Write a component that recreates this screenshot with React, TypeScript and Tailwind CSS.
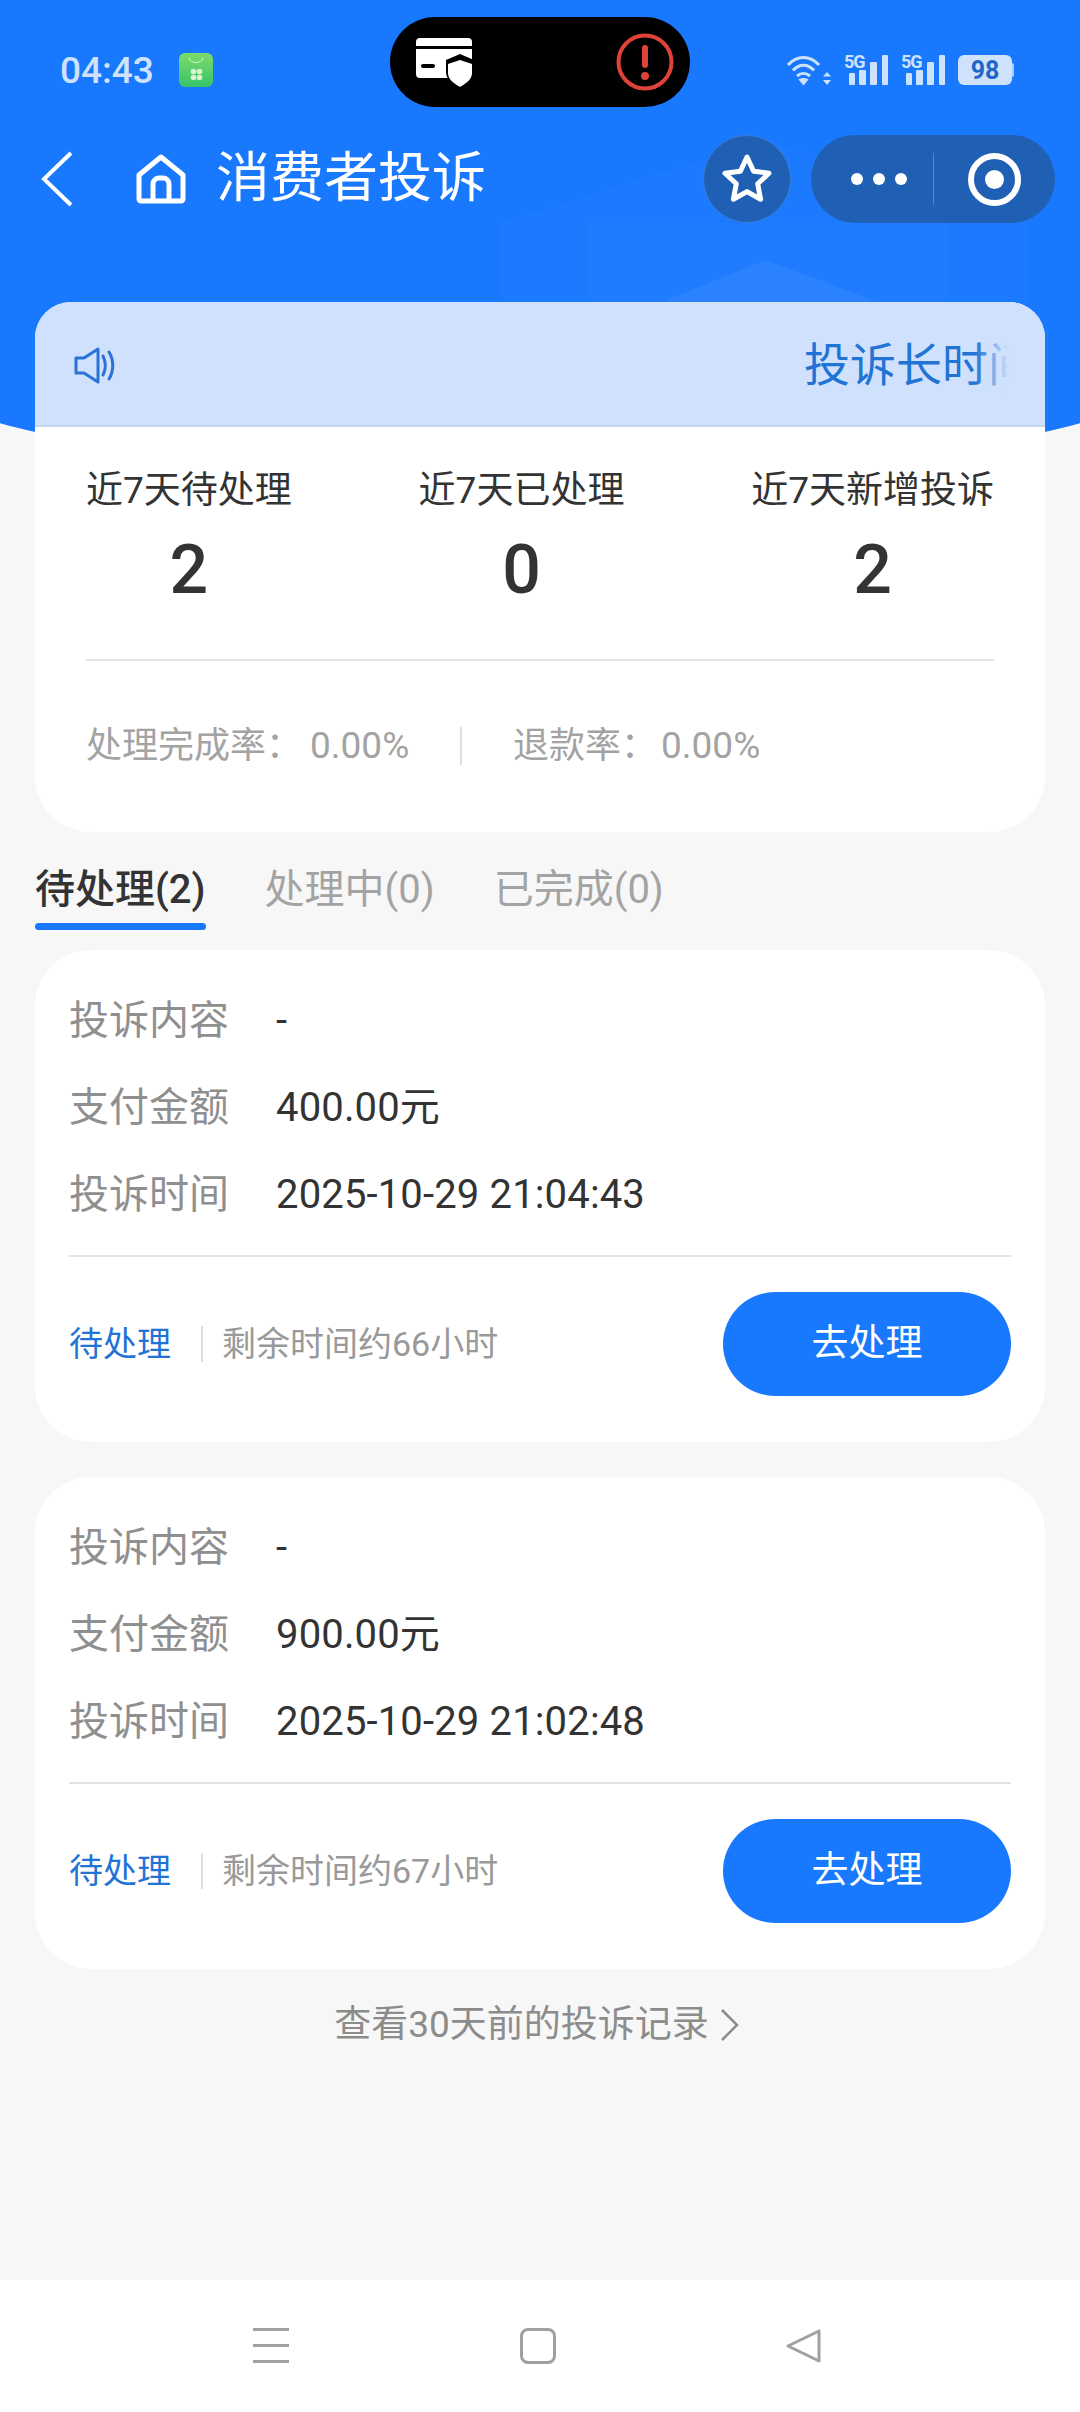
import React from "react";

interface ComplaintProps {
  amount: string;
  time: string;
  hours: number;
}

const complaints: ComplaintProps[] = [
  { amount: "400.00元", time: "2025-10-29 21:04:43", hours: 66 },
  { amount: "900.00元", time: "2025-10-29 21:02:48", hours: 67 },
];

function SignalIcon() {
  return (
    <div className="relative w-[44px] h-[31px]">
      <span className="absolute left-0 top-[-3px] text-[18px] leading-[20px] font-bold tracking-[-1px] text-[#cfe2fb]">
        5G
      </span>
      <svg width="44" height="31" viewBox="0 0 44 31" className="absolute left-0 top-0">
        <rect x="5" y="18" width="6" height="12" rx="1" fill="#cfe2fb" />
        <rect x="15" y="15" width="7" height="15" rx="1" fill="#cfe2fb" />
        <rect x="26" y="7" width="7" height="23" rx="1" fill="#cfe2fb" />
        <rect x="38" y="0" width="6" height="30" rx="1" fill="#cfe2fb" />
      </svg>
    </div>
  );
}

function StatusBar() {
  return (
    <div className="relative h-[135px] flex items-center pt-[5px] pl-[60px] pr-[68px]">
      <span className="text-[37px] font-medium text-[#cfe2fb] leading-none w-[119px]">04:43</span>
      <svg width="34" height="34" viewBox="0 0 34 34">
        <defs>
          <linearGradient id="shop" x1="0" y1="0" x2="0" y2="1">
            <stop offset="0" stopColor="#7ddb6a" />
            <stop offset="1" stopColor="#35c46a" />
          </linearGradient>
        </defs>
        <rect width="34" height="34" rx="6" fill="url(#shop)" />
        <path d="M10 5c1 6 13 6 14 0" stroke="#d8f5d0" strokeWidth="1" fill="none" />
        <circle cx="14.5" cy="18.5" r="2.8" fill="#d8f5d0" />
        <circle cx="20.5" cy="18.5" r="2.8" fill="#d8f5d0" />
        <circle cx="14.5" cy="24.5" r="2.8" fill="#d8f5d0" />
        <circle cx="20.5" cy="24.5" r="2.8" fill="#d8f5d0" />
      </svg>

      <div className="absolute left-[390px] top-[17px] w-[300px] h-[90px] bg-black rounded-full flex items-center justify-between pl-[26px] pr-[16px]">
        <svg width="58" height="52" viewBox="0 0 58 52" className="mt-[4px]">
          <path d="M0 4a4 4 0 0 1 4-4h48a4 4 0 0 1 4 4v4H0zM0 11h56v29H4a4 4 0 0 1-4-4z" fill="#fff" />
          <rect x="5" y="26" width="14" height="4" rx="2" fill="#000" />
          <path d="M44 16l14 6v12c0 8-8 14-14 17-6-3-14-9-14-17V22z" fill="#000" />
          <path d="M44 22l12 4v9c0 7-7 11-12 14-5-3-12-7-12-14v-9z" fill="#fff" />
        </svg>
        <svg width="58" height="58" viewBox="0 0 58 58">
          <circle cx="29" cy="29" r="26.5" stroke="#df4238" strokeWidth="4" fill="none" />
          <rect x="26" y="12" width="6" height="23" rx="3" fill="#df4238" />
          <circle cx="29" cy="43" r="4" fill="#df4238" />
        </svg>
      </div>

      <div className="ml-auto flex items-center gap-[13px]">
        <svg width="44" height="31" viewBox="0 0 44 31" fill="none">
          <path d="M1 10C10 0 23 0 32 10" stroke="#cfe2fb" strokeWidth="3" />
          <path d="M6 15.500c6-7 15-7 21 0" stroke="#cfe2fb" strokeWidth="3" />
          <path d="M10 21c4-3.500 9-3.500 13 0" stroke="#cfe2fb" strokeWidth="3" />
          <path d="M11.500 24.500c3-2 7-2 10 0l-5 6z" fill="#cfe2fb" />
          <path d="M40 17l4 4.500h-8zM40 30l4-5h-8z" fill="#cfe2fb" />
        </svg>
        <SignalIcon />
        <SignalIcon />
        <div className="relative w-[54px] h-[30px] rounded-[6px] bg-[#cfe2fb] flex items-center justify-center">
          <span className="text-[25px] font-bold leading-none text-[#1f66c8]">98</span>
          <span className="absolute right-[-2px] top-[8px] w-[2px] h-[14px] bg-[#a9cbf8] rounded-r-sm" />
        </div>
      </div>
    </div>
  );
}

function NavBar() {
  return (
    <div className="relative flex items-center h-[88px] pl-[41px] pr-[25px]">
      <svg width="32" height="56" viewBox="0 0 32 56" fill="none">
        <path d="M30 2L3 28l27 26" stroke="#fff" strokeWidth="4" />
      </svg>
      <svg width="50" height="50" viewBox="0 0 50 50" fill="none" className="ml-[63px]">
        <path
          d="M3 21L25 3l22 18v24a2 2 0 0 1-2 2H5a2 2 0 0 1-2-2zM17 47V30a6 6 0 0 1 6-6h4a6 6 0 0 1 6 6v17"
          stroke="#fff"
          strokeWidth="5"
          strokeLinejoin="round"
        />
      </svg>
      <h1 className="ml-[30px] text-[54px] leading-[70px] font-normal text-white">消费者投诉</h1>
      <div className="ml-auto w-[88px] h-[88px] rounded-full bg-[#2060b4] border border-[#3a7dd6] flex items-center justify-center">
        <svg width="52" height="52" viewBox="0 0 52 52" fill="none">
          <path
            d="M26 4l6.600 14.200 15.400 2-11.300 10.600 2.900 15.400L26 38.600l-13.600 7.600 2.900-15.400L4 20.200l15.400-2z"
            stroke="#fff"
            strokeWidth="5"
            strokeLinejoin="round"
          />
        </svg>
      </div>
      <div className="ml-[20px] w-[244px] h-[88px] rounded-full bg-[#2060b4] flex items-center">
        <div className="w-[122px] flex items-center justify-end gap-[10px] pr-[26px]">
          <span className="w-[12px] h-[12px] rounded-full bg-white" />
          <span className="w-[12px] h-[12px] rounded-full bg-white" />
          <span className="w-[12px] h-[12px] rounded-full bg-white" />
        </div>
        <span className="w-px h-[52px] bg-[#4f88d0]" />
        <div className="flex-1 flex items-center justify-center">
          <span className="w-[53px] h-[53px] rounded-full border-[6px] border-white flex items-center justify-center">
            <span className="w-[19px] h-[19px] rounded-full bg-white" />
          </span>
        </div>
      </div>
    </div>
  );
}

function StatColumn({ label, value }: { label: string; value: number }) {
  return (
    <div className="flex flex-col items-center">
      <span className="text-[37px] leading-[50px] text-[#333333]">{label}</span>
      <span className="mt-[19px] text-[68px] leading-[70px] font-medium text-[#333333]">{value}</span>
    </div>
  );
}

function SummaryCard() {
  return (
    <div className="relative mx-[35px] mt-[79px] bg-white rounded-t-[36px] rounded-b-[56px] overflow-hidden">
      <div className="h-[125px] pt-[3px] bg-[#cfe1fc] border-b-2 border-[#c2d9f2] flex items-center pl-[39px] pr-[36px]">
        <svg width="42" height="37" viewBox="0 0 42 37" fill="none" stroke="#2a72d4" strokeWidth="3" strokeLinejoin="round" strokeLinecap="round">
          <path d="M2 11h8L24 2v33L10 26H2z" />
          <path d="M29 9c3 6 3 13 0 19" />
          <path d="M35 5c5 8 5 19 0 27" />
        </svg>
        <div className="relative flex-1 overflow-hidden ml-[5px] h-[60px]">
          <span className="absolute left-[683px] top-0 text-[46px] leading-[60px] whitespace-nowrap text-[#2273d6]">
            投诉长时间
          </span>
          <span className="absolute right-0 top-0 w-[34px] h-[60px] bg-gradient-to-r from-transparent to-[#cfe1fc]" />
        </div>
      </div>
      <div className="px-[51px] pt-[39px] pb-[61px]">
        <div className="flex justify-between">
          <StatColumn label="近7天待处理" value={2} />
          <StatColumn label="近7天已处理" value={0} />
          <StatColumn label="近7天新增投诉" value={2} />
        </div>
        <div className="mt-[54px] h-[2px] bg-[#e5e5e5]" />
        <div className="mt-[60px] flex items-center text-[36px] leading-[50px] text-[#a3a3a3]">
          <span className="w-[324px]">
            处理完成率：<span className="ml-[8px] text-[37px]">0.00%</span>
          </span>
          <span className="ml-[50px] w-[2px] h-[38px] bg-[#dedede]" />
          <span className="ml-[51px]">
            退款率：<span className="ml-[4px] text-[37px]">0.00%</span>
          </span>
        </div>
      </div>
    </div>
  );
}

function Tabs() {
  return (
    <div className="flex gap-[59px] mx-[35px] mt-[33px] text-[40px] leading-[50px]">
      <div className="flex flex-col">
        <span className="font-medium text-[#333333]">待处理(2)</span>
        <span className="mt-[8px] h-[7px] rounded-full bg-[#1878fe]" />
      </div>
      <span className="text-[#a3a3a3]">处理中(0)</span>
      <span className="text-[#a3a3a3]">已完成(0)</span>
    </div>
  );
}

function InfoRow({ label, value }: { label: string; value: string }) {
  return (
    <div className="flex items-center h-[50px] text-[40px]">
      <span className="w-[207px] text-[#8f8f8f]">{label}</span>
      <span className="text-[#333333] tracking-[0.15px]">{value}</span>
    </div>
  );
}

function ComplaintCard({ complaint }: { complaint: ComplaintProps }) {
  return (
    <div className="mx-[35px] bg-white rounded-[56px] px-[34px] pt-[46px] pb-[46px]">
      <div className="flex flex-col gap-[37px]">
        <InfoRow label="投诉内容" value="-" />
        <InfoRow label="支付金额" value={complaint.amount} />
        <InfoRow label="投诉时间" value={complaint.time} />
      </div>
      <div className="mt-[35px] h-[2px] bg-[#e3e3e3]" />
      <div className="mt-[35px] flex items-center">
        <span className="text-[34px] leading-[50px] text-[#2273d6]">待处理</span>
        <span className="ml-[30px] w-[2px] h-[36px] bg-[#dedede]" />
        <span className="ml-[19px] text-[34px] leading-[50px] text-[#999999]">
          剩余时间约{complaint.hours}小时
        </span>
        <button className="ml-auto w-[288px] h-[104px] rounded-[52px] bg-[#1878fe] text-[37px] text-white">
          去处理
        </button>
      </div>
    </div>
  );
}

function BottomNav() {
  return (
    <div className="h-[132px] bg-white flex justify-between pt-[48px] pl-[253px] pr-[258px]">
      <div className="w-[36px] h-[35px] flex flex-col justify-between">
        <span className="h-[3px] bg-[#a0a0a0]" />
        <span className="h-[3px] bg-[#a0a0a0]" />
        <span className="h-[3px] bg-[#a0a0a0]" />
      </div>
      <div className="w-[36px] h-[36px] rounded-[8px] border-[3px] border-[#a0a0a0]" />
      <svg width="36" height="36" viewBox="0 0 36 36" fill="none">
        <path d="M33 3v30L2 18z" stroke="#a0a0a0" strokeWidth="3" strokeLinejoin="round" />
      </svg>
    </div>
  );
}

export default function App() {
  return (
    <div className="relative w-[1080px] h-[2412px] overflow-hidden flex flex-col bg-[#f7f7f7] font-['Roboto','Noto_Sans_CJK_SC',sans-serif]">
      <div className="absolute left-[-80px] top-0 w-[1240px] h-[474px] bg-[#1878fe] rounded-b-[620px_100px]" />
      {/* faint house shape behind the header */}
      <svg className="absolute left-[440px] top-0" width="640" height="310" viewBox="0 0 640 310">
        <path d="M60 310V223L326 140l261 83v87z" fill="#fff" opacity="0.02" />
        <path d="M147 310V223H507V310z" fill="#fff" opacity="0.02" />
        <path d="M222 302l104-42 112 42z" fill="#fff" opacity="0.05" />
      </svg>

      <div className="relative flex-1">
        <StatusBar />
        <NavBar />
        <SummaryCard />
        <Tabs />
        <div className="mt-[20px] flex flex-col gap-[35px]">
          {complaints.map((complaint) => (
            <ComplaintCard key={complaint.time} complaint={complaint} />
          ))}
        </div>
        <div className="mt-[31px] pr-[6px] flex items-center justify-center text-[37px] leading-[50px] text-[#8c8c8c]">
          查看30天前的投诉记录
          <svg width="20" height="34" viewBox="0 0 20 34" fill="none" className="ml-[11px]">
            <path d="M2 2l15 15L2 32" stroke="#8c8c8c" strokeWidth="2.5" />
          </svg>
        </div>
      </div>
      <BottomNav />
    </div>
  );
}
